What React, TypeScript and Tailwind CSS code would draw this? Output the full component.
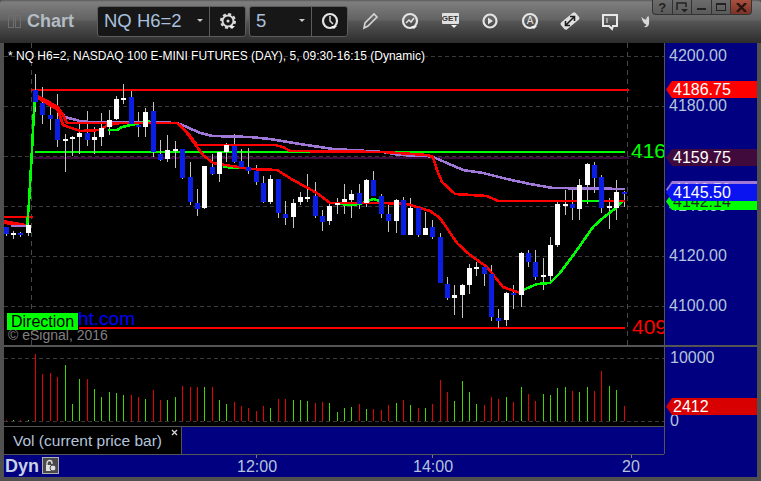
const FONT = "font-['Liberation_Sans',Arial,sans-serif]";

type C = [number, 'b' | 'w', number, number, number, number];
// groups: wick top, wick bottom, body top, body bottom in crop units (3x)
const g1: C[] = [
  [6,'b',472,500,472,492],[13,'w',482,506,488,494],[20,'b',485,500,489,495],[28,'w',455,497,465,489],
  [35,'b',12,125,60,96],[42,'b',50,162,99,135],[50,'b',95,180,135,147],[57,'b',72,231,147,210],
  [65,'w',192,306,207,213],[72,'w',198,258,201,207],[79,'w',155,252,189,201],[87,'b',123,228,189,210],
  [94,'w',171,252,201,210],[101,'w',129,228,174,201],[109,'w',120,195,150,171],[116,'w',78,150,87,147],
  [123,'w',42,102,84,90],[131,'b',63,165,81,162],[138,'b',126,200,165,171],[145,'w',114,201,126,171],
  [153,'b',96,261,123,246],[160,'b',210,273,252,270],[167,'w',195,276,240,267],[175,'w',213,294,237,243],
  [182,'b',237,327,237,324],[190,'b',276,405,321,396],[197,'b',357,438,399,417],[204,'w',288,417,288,414],
  [212,'b',252,315,291,312],[219,'w',246,336,246,312],[226,'w',219,276,225,246],[234,'b',192,279,228,276],
  [241,'b',237,297,273,291],[248,'b',234,312,291,303],
];
const g2: C[] = [
  [256,'b',165,225,183,216],[263,'b',198,279,219,276],[270,'w',195,282,207,276],[278,'b',207,324,207,309],
  [285,'b',273,345,312,324],[293,'w',267,354,279,321],[300,'w',246,285,261,276],[307,'w',192,276,261,267],
  [315,'b',216,324,258,318],[322,'b',300,363,318,336],[329,'w',276,345,288,333],[337,'w',264,312,279,285],
  [344,'w',222,312,267,276],[351,'w',240,324,252,270],[359,'b',222,297,249,282],[366,'w',207,291,210,279],
  [373,'b',183,258,210,258],[381,'b',252,324,258,312],[388,'b',285,366,312,333],[396,'w',267,369,270,333],
  [403,'b',261,375,270,375],[410,'w',264,375,294,375],[418,'b',288,381,294,375],[425,'w',306,375,354,375],
];
const g3: C[] = [
  [432,'b',210,267,231,261],[440,'b',249,399,261,399],[447,'b',381,450,402,444],[454,'w',405,495,435,444],
  [462,'w',402,504,405,435],[469,'w',342,432,354,405],[476,'w',336,378,351,357],[484,'b',342,408,351,372],
  [491,'b',345,513,372,501],[498,'b',477,534,504,513],[506,'w',426,528,429,510],[513,'b',405,477,429,435],
  [521,'w',306,471,309,435],[528,'b',300,351,309,336],[535,'b',300,390,336,381],[543,'w',324,420,375,381],
  [550,'w',261,402,285,378],[557,'w',153,291,162,285],[565,'w',120,195,162,168],[572,'b',111,210,162,174],
  [579,'w',87,210,105,177],[587,'w',39,162,42,105],[594,'b',36,129,45,84],[601,'b',75,189,81,174],
  [609,'w',144,237,168,174],[616,'w',90,210,126,174],[624,'b',123,171,126,132],
];
const conv = (g: C[], o: number): C[] =>
  g.map(([x, k, a, b, c, d]) => [x, k, o + a / 3, o + b / 3, o + c / 3, o + d / 3] as C);
const candles = [...conv(g1, 70), ...conv(g2, 110), ...conv(g3, 150)];

type V = [number, 'r' | 'g', number];
const v1: V[] = [
  [6,'r',360],[13,'g',360],[20,'r',360],[28,'g',360],[35,'r',162],[42,'r',222],[50,'r',219],[57,'r',231],
  [65,'g',195],[72,'g',312],[79,'g',237],[87,'r',237],[94,'g',267],[101,'g',291],[109,'g',276],[116,'g',279],
  [123,'g',285],[131,'r',285],[138,'r',291],[145,'g',297],[153,'r',270],[160,'r',300],[167,'g',300],[175,'g',291],
  [182,'r',258],[190,'r',261],[197,'r',261],[204,'g',261],[212,'r',261],[219,'g',300],[226,'g',312],[234,'r',306],
  [241,'r',318],[248,'r',324],
];
const v2: V[] = [
  [256,'r',213],[263,'r',198],[270,'g',204],[278,'r',177],[285,'r',177],[293,'g',180],[300,'g',180],[307,'g',183],
  [315,'r',189],[322,'r',186],[329,'g',189],[337,'g',216],[344,'g',204],[351,'g',201],[359,'r',192],[366,'g',207],
  [373,'r',207],[381,'r',210],[388,'r',195],[396,'g',189],[403,'r',180],[410,'g',195],[418,'r',204],[425,'g',204],
  [432,'r',192],[440,'r',120],[447,'r',156],[454,'g',183],[462,'g',123],[469,'g',156],[476,'g',192],[484,'r',195],
  [491,'r',171],[498,'r',177],
];
const v3: V[] = [
  [506,'g',291],[513,'r',306],[521,'g',261],[528,'r',282],[535,'r',303],[543,'g',282],[550,'g',285],[557,'g',264],
  [565,'g',261],[572,'r',273],[579,'g',276],[587,'g',261],[594,'r',273],[601,'r',213],[609,'g',258],[616,'g',270],
  [624,'r',318],
];
const vols: V[] = [
  ...v1.map(([x, c, t]) => [x, c, 300 + t / 3] as V),
  ...v2.map(([x, c, t]) => [x, c, 340 + t / 3] as V),
  ...v3.map(([x, c, t]) => [x, c, 300 + t / 3] as V),
];

const purple = "55,105 65,117 80,121 90,122 147,122 177,123 187,127 200,133 213,136 250,137 270,139 300,144 333,149 367,151 383,152 400,155 427,156 433,157 447,163 463,170 483,173 507,179 530,184 553,188 625,189";
const redUpper = "35,95 45,100 58,107 63,115 67,123 177,123 187,132 197,145 275,145 283,147 290,151 383,152 427,155 433,157 437,170 442,182 455,194 487,196 498,201 625,201";
const redLower = "38,98 58,110 63,125 80,131 100,130 108,125 120,123 177,123 183,128 192,140 203,155 213,163 250,169 277,170 293,180 317,193 330,203 383,203 407,204 430,211 440,218 457,243 470,255 487,267 503,287 520,293";
const green1 = "27,226 29,203 31,167 32,150 33,130 34,110 35,95";
const green2 = "108,130 117,130 122,127 140,123 150,121";
const green3 = "340,204 353,205 363,203 373,199 383,202";
const green4 = "523,290 537,284 550,283 560,273 577,250 593,227 603,218 617,207 623,200";

function Down({ x, y }: { x: number; y: number }) {
  return <path d={`M${x} ${y}h6l-3 3z`} fill="#f0f0f0" />;
}

const LW = 2.6;

function PriceChart() {
  return (
    <svg viewBox="4 43 660 302" width={660} height={302} className="absolute inset-0" shapeRendering="crispEdges">
      {[56, 106, 156, 206, 256, 306].map((y) => (
        <line key={y} x1={4} x2={664} y1={y + 0.5} y2={y + 0.5} stroke="#3a3a3a" strokeDasharray="4 3" />
      ))}
      {[31, 627].map((x) => (
        <line key={x} x1={x + 0.5} x2={x + 0.5} y1={43} y2={345} stroke="#484848" strokeDasharray="5 4" />
      ))}
      <rect x={4} y={216} width={29} height={2} fill="#ff0000" />
      <polyline points="4,221 16,223 27,225" fill="none" stroke="#ff0000" strokeWidth={2} />
      <polyline points="4,223 16,225 27,226" fill="none" stroke="#ff0000" strokeWidth={2} />
      <polyline points="11,226 27,226" fill="none" stroke="#a078d8" strokeWidth={2} />
      <rect x={31} y={157} width={598} height={2} fill="#3c0a3c" />
      <rect x={35} y={151} width={590} height={2} fill="#00ff00" />
      <rect x={31} y={89} width={598} height={2} fill="#ff0000" />
      <rect x={79} y={327} width={546} height={2} fill="#ff0000" />
      {candles.map(([x, k, a, b]) => (
        <rect key={`w${x}`} x={x} y={Math.round(a)} width={1} height={Math.round(b - a)} fill="#c4c4c4" />
      ))}
      <polyline points={purple} fill="none" stroke="#a078d8" strokeWidth={LW} />
      <polyline points={green2} fill="none" stroke="#00ff00" strokeWidth={LW} />
      <polyline points="112,123 147,123" fill="none" stroke="#00ff00" strokeWidth={LW} />
      <polyline points="223,167 247,168" fill="none" stroke="#00ff00" strokeWidth={LW} />
      <polyline points={green3} fill="none" stroke="#00ff00" strokeWidth={LW} />
      <polyline points={green1} fill="none" stroke="#00ff00" strokeWidth={LW} />
      <polyline points={green4} fill="none" stroke="#00ff00" strokeWidth={LW} />
      <polyline points={redUpper} fill="none" stroke="#ff0000" strokeWidth={LW} />
      <polyline points={redLower} fill="none" stroke="#ff0000" strokeWidth={LW} />
      <rect x={577} y={200} width={24} height={2} fill="#00ff00" />
      {candles.map(([x, k, , , c, d]) => (
        <rect key={`b${x}`} x={x - 2} y={Math.round(c)} width={5} height={Math.max(2, Math.round(d - c))} fill={k === 'b' ? '#0a1ee6' : '#ffffff'} />
      ))}
    </svg>
  );
}

function VolumeChart() {
  return (
    <svg viewBox="4 347 660 79" width={660} height={79} className="absolute inset-0" shapeRendering="crispEdges">
      <line x1={4} x2={664} y1={358.5} y2={358.5} stroke="#3a3a3a" strokeDasharray="4 3" />
      <line x1={4} x2={664} y1={421.5} y2={421.5} stroke="#3a3a3a" strokeDasharray="4 3" />
      {vols.map(([x, c, t]) => (
        <rect key={x} x={x} y={Math.round(t)} width={1} height={421 - Math.round(t)} fill={c === 'r' ? '#e60000' : '#44d400'} />
      ))}
    </svg>
  );
}

function Flag({ top, bg, text, color = 'text-white', h = 'h-[17px]' }: { top: string; bg: string; text: string; color?: string; h?: string }) {
  return (
    <div className={`absolute left-px right-0 ${top} ${h} flex items-center pl-[7px] text-[16px] leading-none ${bg} ${color} [clip-path:polygon(6px_0,100%_0,100%_100%,6px_100%,0_50%)]`}>
      {text}
    </div>
  );
}

function Tool({ children, w = 20 }: { children: React.ReactNode; w?: number }) {
  return (
    <svg width={w} height={20} viewBox="0 0 20 20" className="shrink-0">
      {children}
    </svg>
  );
}

const ic = { fill: 'none', stroke: '#e4e4e4', strokeWidth: 2.2 };

function Dropdown({ label, w, textW, icon }: { label: string; w: string; textW: string; icon: React.ReactNode }) {
  return (
    <div className={`${w} h-[31px] flex rounded-[3px] border border-[#5c5c5c] bg-[#171717]`}>
      <div className={`${textW} flex items-center justify-between pl-[6px] pr-[6px] border-r border-[#5c5c5c]`}>
        <span className="text-[18.5px] leading-none text-[#a9c0dc]">{label}</span>
        <svg width={6} height={4}><path d="M0 0h6l-3 3z" fill="#c8c8c8" /></svg>
      </div>
      <div className="flex-1 flex items-center justify-center">{icon}</div>
    </div>
  );
}

function WinBtn({ children, last }: { children: React.ReactNode; last?: boolean }) {
  return (
    <div className={`w-5 h-full flex items-center justify-center ${last ? 'bg-gradient-to-b from-[#a85040] to-[#7c3226]' : 'border-r border-[#333]'}`}>
      {children}
    </div>
  );
}

export default function App() {
  return (
    <div className={`${FONT} relative w-[761px] h-[481px] overflow-hidden flex flex-col bg-[#505050]`}>
      {/* title bar */}
      <div className="relative h-[43px] flex items-center bg-[linear-gradient(180deg,#5a5a5a_0px,#7e7e7e_2px,#626262_20px,#565656_21px,#2c2c2c_43px)] rounded-t-[4px] pb-px">
        <div className="flex items-center w-[97px] pl-2">
          <span className="w-[6px] h-[13px] border border-[#6e6e6e] mr-px" />
          <span className="w-[6px] h-[13px] border border-[#6e6e6e] mr-[6px]" />
          <span className="text-[18px] font-bold leading-none text-[#b4bcc4]">Chart</span>
        </div>
        <Dropdown
          label="NQ H6=2"
          w="w-[149px]"
          textW="w-[112px]"
          icon={
            <Tool>
              <circle cx={10} cy={10} r={7} fill="none" stroke="#dcdcdc" strokeWidth={2} strokeDasharray="3 2.5" />
              <circle cx={10} cy={10} r={5.5} fill="none" stroke="#dcdcdc" strokeWidth={2} />
              <circle cx={10} cy={10} r={1.5} fill="#dcdcdc" />
              <Down x={11} y={15} />
            </Tool>
          }
        />
        <div className="w-[3px]" />
        <Dropdown
          label="5"
          w="w-[99px]"
          textW="w-[62px]"
          icon={
            <Tool>
              <circle cx={10} cy={10} r={7} {...ic} />
              <path d="M10 5v5l3 3" fill="none" stroke="#dcdcdc" strokeWidth={1.5} />
              <Down x={11} y={15} />
            </Tool>
          }
        />
        <div className="flex items-center ml-[12px] gap-[20px]">
          <Tool>
            <path d="M4 17l1-5L14 3l3 3-9 9z" fill="none" stroke="#d4d4d4" strokeWidth={1.6} />
          </Tool>
          <Tool>
            <circle cx={10} cy={10} r={7} {...ic} />
            <path d="M6 12l3-3 2 2 3-4" fill="none" stroke="#e4e4e4" strokeWidth={1.5} />
            <Down x={11} y={15} />
          </Tool>
          <div className="relative w-5 h-5 flex items-start justify-center">
            <span className="mt-[2px] w-[17px] h-[11px] bg-[#e0e0e0] rounded-[1px] text-[8px] font-bold leading-[11px] text-center text-[#333]">GET</span>
            <svg width={6} height={4} className="absolute left-[11px] top-[14px]"><path d="M0 0h6l-3 3z" fill="#f0f0f0" /></svg>
          </div>
          <Tool>
            <circle cx={10} cy={10} r={6.5} {...ic} />
            <path d="M8 6.5l5 3.5-5 3.5z" fill="#e4e4e4" />
          </Tool>
          <div className="relative w-5 h-5">
            <svg width={20} height={20} className="absolute inset-0">
              <circle cx={10} cy={10} r={7} {...ic} />
              <Down x={11} y={15} />
            </svg>
            <span className="absolute inset-0 flex items-center justify-center text-[10px] leading-none text-[#e4e4e4]">A</span>
          </div>
          <Tool>
            <rect x={0.5} y={5.5} width={19} height={9} rx={2} fill="#e0e0e0" transform="rotate(-40 10 10)" />
            <path d="M6 14l8-8M10 5.5h4.5V10M5.5 10v4.5H10" stroke="#1c1c1c" strokeWidth={1.6} fill="none" />
          </Tool>
          <Tool>
            <path d="M3 4h14v11h-4l-1 3-3-3H3z" fill="none" stroke="#e8e8e8" strokeWidth={2} />
            <path d="M7 7v5" stroke="#e8e8e8" />
          </Tool>
          <Tool w={14}>
            <path d="M2 4c2 3 5 4 7 4 0-2 1-4 3-5l1 3v7c0 3-2 6-5 6l-3-1c2 0 4-1 4-3-3 0-6-5-7-11z" fill="#d8d8d8" />
          </Tool>
        </div>
        {/* window controls */}
        <div className="absolute top-0 left-[652px] w-[100px] h-[15px] flex rounded-b-[4px] overflow-hidden border border-t-0 border-[#333] bg-gradient-to-b from-[#6c6c6c] to-[#5a5a5a]">
          <WinBtn><span className="text-[13px] font-bold leading-none text-[#222]">?</span></WinBtn>
          <WinBtn>
            <svg width={12} height={11}>
              <path d="M1 8V1h9v4" fill="none" stroke="#222" strokeWidth={1.5} />
              <path d="M5 7h7l-3.5 3.5z" fill="#222" />
            </svg>
          </WinBtn>
          <WinBtn><span className="w-[9px] h-[2px] mt-1 bg-[#222]" /></WinBtn>
          <WinBtn><span className="w-[10px] h-[8px] border border-[#222] border-t-2" /></WinBtn>
          <WinBtn last>
            <svg width={11} height={9}><path d="M1 0l9 9M10 0L1 9" stroke="#2a1410" strokeWidth={2.4} /></svg>
          </WinBtn>
        </div>
      </div>

      {/* body */}
      <div className="flex flex-1 px-[4px] pb-[4px]">
        <div className="flex-1 flex flex-col overflow-hidden">
          {/* price pane */}
          <div className="flex h-[302px]">
            <div className="relative w-[660px] bg-black border-r-0 overflow-hidden">
              <PriceChart />
              <div className="absolute left-[4px] top-[6px] text-[12px] leading-[14px] text-white whitespace-nowrap [text-shadow:1px_0_0_#000,-1px_0_0_#000]">
                * NQ H6=2, NASDAQ 100 E-MINI FUTURES (DAY), 5, 09:30-16:15 (Dynamic)
              </div>
              <span className="absolute left-[627px] top-[96px] text-[21px] leading-[24px] text-[#00ff00]">4160</span>
              <span className="absolute left-[628px] top-[272px] text-[21px] leading-[24px] text-[#ff0000]">4090</span>
              <span className="absolute left-[74px] top-[265px] text-[19px] leading-[22px] text-[#0000ff]">ht.com</span>
              <span className="absolute left-[3px] top-[270px] w-[71px] h-[17px] bg-[#00ff00] pl-[4px] text-[16px] leading-[17px] text-black">Direction</span>
              <span className="absolute left-[4px] top-[284px] text-[14px] leading-[16px] text-[#808080]">© eSignal, 2016</span>
            </div>
            <div className="relative flex-1 bg-[#000080] border-l border-[#555] overflow-hidden text-[16px] leading-none text-[#b4c4dc]">
              {[['4200.00', 5], ['4180.00', 55], ['4160.00', 105], ['4140.00', 155], ['4120.00', 205], ['4100.00', 255]].map(([t, y]) => (
                <span key={t as string} className="absolute left-[4px]" style={{ top: (y as number) }}>{t}</span>
              ))}
              <Flag top="top-[38px]" bg="bg-[#ff0000]" text="4186.75" />
              <Flag top="top-[106px]" bg="bg-[#400a3c]" text="4159.75" />
              <Flag top="top-[138px]" bg="bg-[#a078d8]" text="4146.50" color="text-[#d0d0e0]" />
              <Flag top="top-[150px]" bg="bg-[#00ff00]" text="4142.14" color="text-[#14321e]" />
              <Flag top="top-[141px]" bg="bg-[#0a14f0]" text="4145.50" />
            </div>
          </div>
          <div className="h-[2px] bg-[#555] shrink-0" />
          {/* volume + legend */}
          <div className="flex h-[107px]">
            <div className="w-[660px] flex flex-col">
              <div className="relative h-[79px] bg-black">
                <VolumeChart />
              </div>
              <div className="flex-1 flex border-t border-[#555]">
                <div className="relative w-[178px] bg-black border-r border-[#555] pl-[9px] flex items-center">
                  <span className="text-[15.5px] leading-none text-[#b4c4dc] whitespace-nowrap">Vol (current price bar)</span>
                  <svg width={7} height={7} className="absolute right-[3px] top-[2px]"><path d="M1 1l5 5M6 1L1 6" stroke="#d8d8d8" strokeWidth={1.3} /></svg>
                </div>
                <div className="flex-1 bg-[#000080]" />
              </div>
            </div>
            <div className="relative flex-1 bg-[#000080] border-l border-[#555] overflow-hidden text-[16px] leading-none text-[#b4c4dc]">
              <span className="absolute left-[5px] top-[3px]">10000</span>
              <span className="absolute left-[5px] top-[66px] h-[13px] overflow-hidden">0</span>
              <Flag top="top-[51px]" bg="bg-[#d80000]" text="2412" />
            </div>
          </div>
          {/* time axis */}
          <div className="relative h-[23px] shrink-0 bg-[#000080] flex items-center text-[16px] leading-none text-[#b4c4dc]">
            <div className="absolute left-0 top-0 w-[660px] h-px bg-[#555]" />
            {[252, 428, 627].map((x) => (
              <span key={x} className="absolute top-px w-px h-[3px] bg-[#777]" style={{ left: x }} />
            ))}
            <span className="absolute left-[233px] top-[5px]">12:00</span>
            <span className="absolute left-[409px] top-[5px]">14:00</span>
            <span className="absolute left-[618px] top-[5px]">20</span>
            <span className="ml-px text-[18px] font-bold text-[#c8d0e4]">Dyn</span>
            <span className="ml-[3px] w-[17px] h-[17px] bg-[#4a4a4a] border border-[#b0b0b0] flex items-center justify-center">
              <svg width={13} height={13}>
                <path d="M3 6V4a2.5 2.5 0 0 1 5 0v1" fill="none" stroke="#e0e0e0" strokeWidth={1.3} />
                <rect x={2} y={6} width={6} height={6} fill="#e0e0e0" />
                <circle cx={9} cy={9} r={3} fill="#e0e0e0" stroke="#4a4a4a" />
              </svg>
            </span>
          </div>
        </div>
      </div>
    </div>
  );
}
